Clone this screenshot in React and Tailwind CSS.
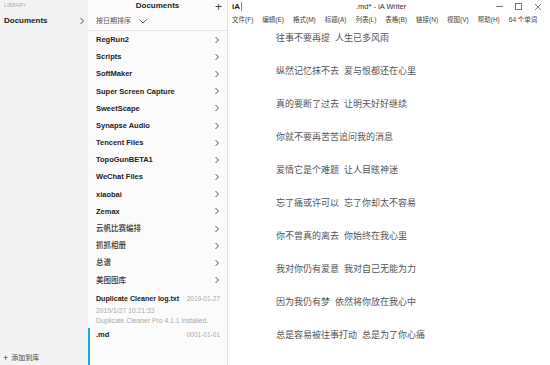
import React from "react";

const folders = [
  "RegRun2",
  "Scripts",
  "SoftMaker",
  "Super Screen Capture",
  "SweetScape",
  "Synapse Audio",
  "Tencent Files",
  "TopoGunBETA1",
  "WeChat Files",
  "xiaobai",
  "Zemax",
  "云帆比赛编排",
  "抓抓相册",
  "总谱",
  "美图图库",
];

const menus = ["文件(F)", "编辑(E)", "格式(M)", "标题(A)", "列表(L)", "表格(B)", "链接(N)", "视图(V)", "帮助(H)"];

const lines = [
  "往事不要再提  人生已多风雨",
  "纵然记忆抹不去  爱与恨都还在心里",
  "真的要断了过去  让明天好好继续",
  "你就不要再苦苦追问我的消息",
  "爱情它是个难题  让人目眩神迷",
  "忘了痛或许可以  忘了你却太不容易",
  "你不曾真的离去  你始终在我心里",
  "我对你仍有爱意  我对自己无能为力",
  "因为我仍有梦  依然将你放在我心中",
  "总是容易被往事打动  总是为了你心痛",
];

const Chevron = ({ className = "" }) => (
  <svg width="6" height="8" viewBox="0 0 6 8" className={className}>
    <path d="M1.5 1 L4.5 4 L1.5 7" fill="none" stroke="#555" strokeWidth="1" />
  </svg>
);

// CJK names show up in a regular weight in the reference
const isCjk = (s) => /[\u4e00-\u9fff]/.test(s);

const App = () => {
  return (
    <div
      className="w-[550px] h-[365px] flex overflow-hidden bg-white text-[#222]"
      style={{ fontFamily: '"Liberation Sans", Arial, "Noto Sans CJK SC", sans-serif' }}
    >
      {/* library sidebar */}
      <div className="w-[88px] h-full bg-[#f3f3f3] flex flex-col">
        <div className="h-[11px] pl-[4px] pt-[2px] text-[5px] tracking-wide text-[#aaa] uppercase">
          Library
        </div>
        <div className="h-[20px] pl-[4px] pr-[3px] flex items-center justify-between">
          <span className="text-[8px] font-bold">Documents</span>
          <Chevron />
        </div>
        <div className="flex-1" />
        <div className="h-[14px] pl-[3px] flex items-center gap-[3px] text-[7px] text-[#444]">
          <span className="text-[9px] leading-none">+</span>
          <span>添加到库</span>
        </div>
      </div>

      {/* document list */}
      <div className="w-[140px] h-full bg-[#fbfbfb] border-r border-[#e6e6e6] flex flex-col">
        <div className="h-[12px] relative flex items-center justify-center">
          <span className="text-[8px] font-bold">Documents</span>
          <span className="absolute right-[5px] top-[-2px] text-[12px] font-light text-[#444]">+</span>
        </div>
        <div className="h-[19px] pl-[8px] flex items-center gap-[8px] border-b border-[#e4e4e4] text-[7px] text-[#555]">
          <span>按日期排序</span>
          <svg width="8" height="5" viewBox="0 0 8 5">
            <path d="M0.5 0.5 L4 4 L7.5 0.5" fill="none" stroke="#555" strokeWidth="1" />
          </svg>
        </div>
        {folders.map((f) => (
          <div key={f} className="h-[17.2px] pl-[8px] pr-[7px] flex items-center justify-between">
            <span className={isCjk(f) ? "text-[7.5px] font-medium text-[#333]" : "text-[7.5px] font-bold"}>{f}</span>
            <Chevron />
          </div>
        ))}
        <div className="pl-[8px] pr-[7px] pt-[4px] h-[39px] leading-[11px]">
          <div className="flex justify-between items-baseline">
            <span className="text-[7.1px] font-bold">Duplicate Cleaner log.txt</span>
            <span className="text-[6.5px] text-[#aaa]">2019-01-27</span>
          </div>
          <div className="text-[6.8px] text-[#aaa]">2019/1/27 10:21:33</div>
          <div className="text-[6.8px] text-[#aaa] leading-[9px]">Duplicate Cleaner Pro 4.1.1 installed.</div>
        </div>
        <div className="flex-1 border-l-2 border-[#1aa7e0] pl-[6px] pr-[7px] pt-[1px]">
          <div className="flex justify-between items-baseline">
            <span className="text-[7.5px] font-bold">.md</span>
            <span className="text-[6.5px] text-[#aaa]">0001-01-01</span>
          </div>
        </div>
      </div>

      {/* editor */}
      <div className="flex-1 h-full bg-white flex flex-col">
        <div className="h-[13px] relative flex items-center pl-[4px]">
          <span className="text-[8px] font-bold">iA</span>
          <span className="w-px h-[9px] bg-[#1aa7e0] ml-[1px]" />
          <span className="absolute left-[128px] text-[7.5px] text-[#333]">.md* - iA Writer</span>
          <div className="absolute right-[8px] top-0 h-[13px] flex items-center gap-[12px] text-[#666]">
            <span className="w-[7px] h-px bg-[#777]" />
            <span className="w-[7px] h-[7px] border border-[#777]" />
            <svg width="8" height="8" viewBox="0 0 8 8">
              <path d="M1 1 L7 7 M7 1 L1 7" stroke="#777" strokeWidth="0.9" />
            </svg>
          </div>
        </div>
        <div className="h-[14px] pl-[4px] flex items-center gap-[9px] text-[6.5px] text-[#444] whitespace-nowrap">
          {menus.map((m) => (
            <span key={m}>{m}</span>
          ))}
          <span>64 个单词</span>
        </div>
        <div className="pl-[48px] pt-[5px] flex flex-col text-[9px] text-[#555]">
          {lines.map((l) => (
            <div key={l} className="h-[33px] whitespace-pre">
              {l}
            </div>
          ))}
        </div>
      </div>
    </div>
  );
};

export default App;
